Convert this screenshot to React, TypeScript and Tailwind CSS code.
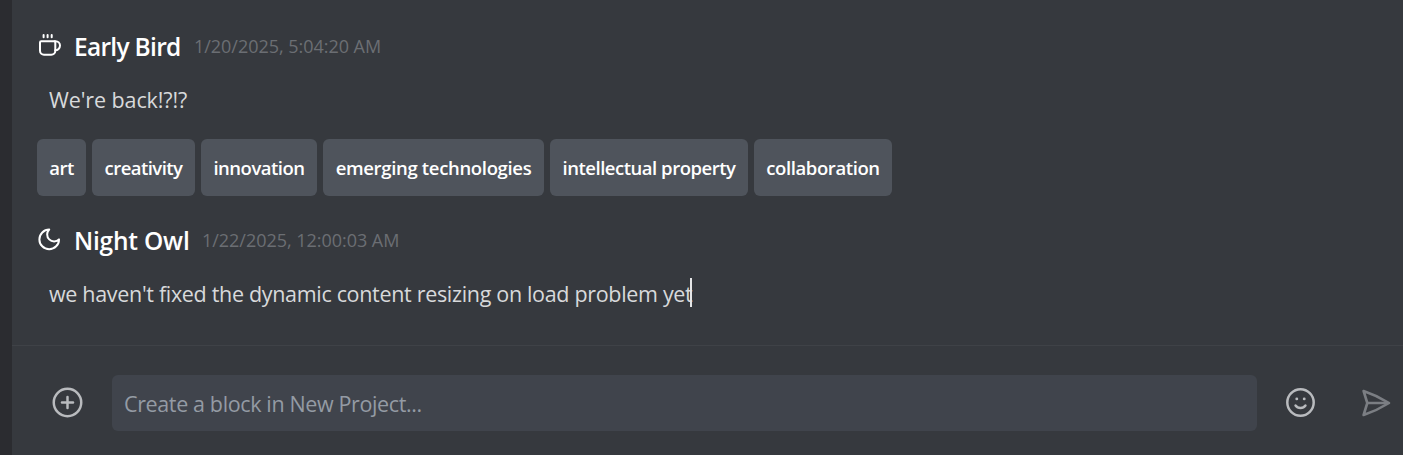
import { CirclePlus } from "lucide-react";
import type { ReactNode } from "react";

const tags: [string, string][] = [
  ["art", "w-[49px] tracking-[-0.5px]"],
  ["creativity", "w-[103px] tracking-[-0.55px]"],
  ["innovation", "w-[116px] tracking-[-0.5px]"],
  ["emerging technologies", "w-[221px] tracking-[-0.33px]"],
  ["intellectual property", "w-[198px] tracking-[-0.48px]"],
  ["collaboration", "w-[138px] tracking-[-0.4px]"],
];

function Header({ icon, name, time, nameClass }: { icon: ReactNode; name: string; time: string; nameClass: string }) {
  return (
    <div className="flex h-[36px] items-center whitespace-nowrap">
      <span className="mb-1 flex w-[37px] shrink-0 items-center text-white">{icon}</span>
      <span className={"text-[24.5px] leading-[36px] font-semibold text-white " + nameClass}>{name}</span>
      <span className="mb-0.5 text-[18px] leading-[36px] tracking-[-0.03px] text-[#6b6e73]">{time}</span>
    </div>
  );
}

function CoffeeIcon() {
  return (
    <svg className="h-6 w-6 overflow-visible" viewBox="0 0 24 24" fill="none" stroke="currentColor" strokeWidth="2" strokeLinecap="round" strokeLinejoin="round">
      <path d="M6.6 2v2.2M10.6 2v2.2M14.7 2v2.2" />
      <path d="M4.2 8.2h12.9a1.2 1.2 0 0 1 1.2 1.2v8.3a4 4 0 0 1-4 4H7a4 4 0 0 1-4-4V9.4a1.2 1.2 0 0 1 1.2-1.2Z" />
      <path d="M17.6 8.2h1a4.4 4.4 0 0 1 4.4 4.4 4.6 4.6 0 0 1-4.8 4.6" />
    </svg>
  );
}

function MoonIcon() {
  return (
    <svg className="h-6 w-6 overflow-visible" viewBox="0 0 24 24" fill="none" stroke="currentColor" strokeWidth="2" strokeLinecap="round" strokeLinejoin="round">
      <path d="M12.200 2.600a6.500 6.500 0 0 0 9.800 9.800A9.800 9.800 0 1 1 12.200 2.600Z" />
    </svg>
  );
}

export default function App() {
  return (
    <div className="flex h-[455px] w-[1403px] overflow-hidden bg-[#36393e] font-['Open_Sans',sans-serif]">
      <aside className="w-3 shrink-0 bg-[#2b2c30]" />
      <main className="flex min-w-0 flex-1 flex-col">
        <section className="flex h-[346px] flex-col border-b border-[#3f4247] pt-[29px] pl-[25px]">
          <Header icon={<CoffeeIcon />} name="Early Bird" time="1/20/2025, 5:04:20 AM" nameClass="w-[120px] tracking-[-0.7px]" />
          <p className="mt-[17px] pl-3 text-[21.5px] leading-9 tracking-[-0.1px] text-[#d8d9db]"><span>We're back!?!?</span></p>
          <div className="mt-[21px] flex gap-1.5">
            {tags.map(([tag, style]) => (
              <span key={tag} className={"flex h-[57px] items-center justify-center rounded-[6px] bg-[#4f545c] text-[18.5px] font-semibold whitespace-nowrap text-white " + style}><span>{tag}</span></span>
            ))}
          </div>
          <div className="mt-[27px]">
            <Header icon={<MoonIcon />} name="Night Owl" time="1/22/2025, 12:00:03 AM" nameClass="w-[128px] tracking-[-0.2px]" />
          </div>
          <p className="mt-[17px] flex items-center pl-3 text-[21.5px] leading-9 tracking-[-0.32px] whitespace-nowrap text-[#d8d9db]">
            <span>we haven't fixed the dynamic content resizing on load problem yet</span>
            <span className="mb-1 -ml-0.5 h-[29px] w-0.5 bg-[#e4e5e6]" />
          </p>
        </section>
        <footer className="flex h-[109px] items-center pt-[5px]">
          <button className="mb-px ml-[39px] flex w-[61px] text-[#b9bbbe]"><CirclePlus className="h-[33px] w-[33px]" strokeWidth={1.8} /></button>
          <div className="flex h-[56px] w-[1145px] items-center rounded-[6px] bg-[#40444c] pt-[3px] pl-3 text-[21.5px] tracking-[-0.37px] text-[#949ba4]"><span>Create a block in New Project...</span></div>
          <svg className="mb-px ml-[27px] h-[33px] w-[33px] shrink-0 text-[#b9bbbe]" viewBox="0 0 24 24" fill="none" stroke="currentColor" strokeWidth="1.8" strokeLinecap="round" strokeLinejoin="round">
            <circle cx="12" cy="12" r="9.6" />
            <path d="M8.4 14.2c1.6 2.3 5.6 2.3 7.2 0" />
            <path d="M9.3 9.4h.01M14.7 9.4h.01" strokeWidth="2.1" />
          </svg>
          <svg className="mb-px ml-[42px] h-[34px] w-[34px] shrink-0 text-[#7b7e83]" viewBox="0 0 34 34" fill="none" stroke="currentColor" strokeWidth="2.6" strokeLinecap="round" strokeLinejoin="round">
            <path d="M4.600 5Q18 9.500 30 17 18 24.500 4.600 29L8.300 17Z" />
            <path d="M8.500 17h20" />
          </svg>
        </footer>
      </main>
    </div>
  );
}
